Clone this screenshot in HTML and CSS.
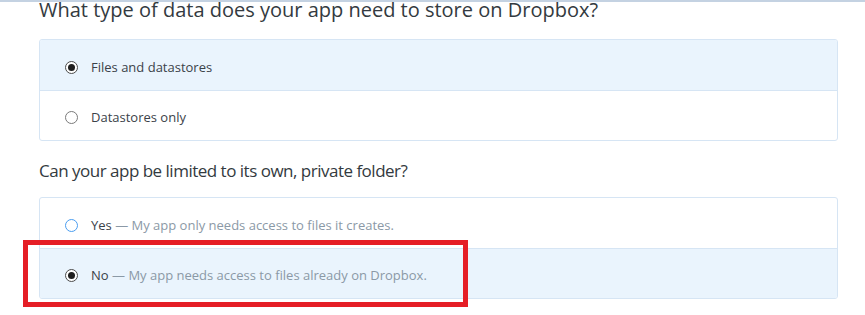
FILE: index.html
```html
<!DOCTYPE html>
<html lang="en">
<head>
  <meta charset="UTF-8" />
  <title>Create a new Dropbox Platform app</title>
  <link rel="stylesheet" href="styles.css">
</head>
<body>
  <div class="topline"></div>
  <div class="page">
    <h2 class="question first">What type of data does your app need to store on Dropbox?</h2>
    <div class="choices">
      <div class="choice selected">
        <span class="radio checked"></span>
        <span class="label">Files and datastores</span>
      </div>
      <div class="choice">
        <span class="radio"></span>
        <span class="label">Datastores only</span>
      </div>
    </div>

    <h2 class="question">Can your app be limited to its own, private folder?</h2>
    <div class="choices">
      <div class="choice">
        <span class="radio focus"></span>
        <span class="label">Yes <span class="desc">— My app only needs access to files it creates.</span></span>
      </div>
      <div class="choice selected">
        <span class="radio checked"></span>
        <span class="label">No <span class="desc">— My app needs access to files already on Dropbox.</span></span>
      </div>
    </div>
  </div>
  <!-- highlight drawn over the screenshot -->
  <div class="highlight"></div>
</body>
</html>
```

FILE: styles.css
```css
* {
  box-sizing: border-box;
}
body {
  margin: 0;
  font-family: "Open Sans", "Liberation Sans", sans-serif;
  color: #3b4249;
  background: #fff;
}
.topline {
  height: 2px;
  background: #c4d2e2;
}
.page {
  margin-top: -5px;
  padding: 0 27px 0 39px;
}
.question {
  font-size: 17px;
  font-weight: normal;
  letter-spacing: -0.5px;
  line-height: 24px;
  margin: 0 0 14px;
  color: #333a40;
}
.question.first {
  font-size: 20px;
  letter-spacing: 0;
  line-height: 26px;
  margin-bottom: 16px;
}
.choices {
  border: 1px solid #d6e5f4;
  border-radius: 3px;
  margin-bottom: 18px;
  overflow: hidden;
}
.choice {
  display: flex;
  align-items: flex-start;
  height: 50px;
  padding: 15px 0 0 25px;
  font-size: 13px;
  line-height: 24px;
}
.choice + .choice {
  border-top: 1px solid #d6e5f4;
  padding-top: 14px;
}
.choice.selected {
  background: #eaf4fd;
}
.radio {
  width: 13px;
  height: 13px;
  margin-top: 6px;
  margin-right: 13px;
  border: 1px solid #7a7a7a;
  border-radius: 50%;
  background: #fff;
  display: flex;
  align-items: center;
  justify-content: center;
  flex-shrink: 0;
}
.radio.checked {
  border-color: #4b4b4b;
}
.radio.checked::after {
  content: "";
  width: 7px;
  height: 7px;
  border-radius: 50%;
  background: #1e1e1e;
}
.radio.focus {
  border-color: #4a9df0;
}
.label {
  color: #3b4249;
}
.desc {
  color: #8b99a6;
}
.highlight {
  position: absolute;
  left: 23px;
  top: 240px;
  width: 445px;
  height: 67px;
  border: 5px solid #e51e26;
}
```
